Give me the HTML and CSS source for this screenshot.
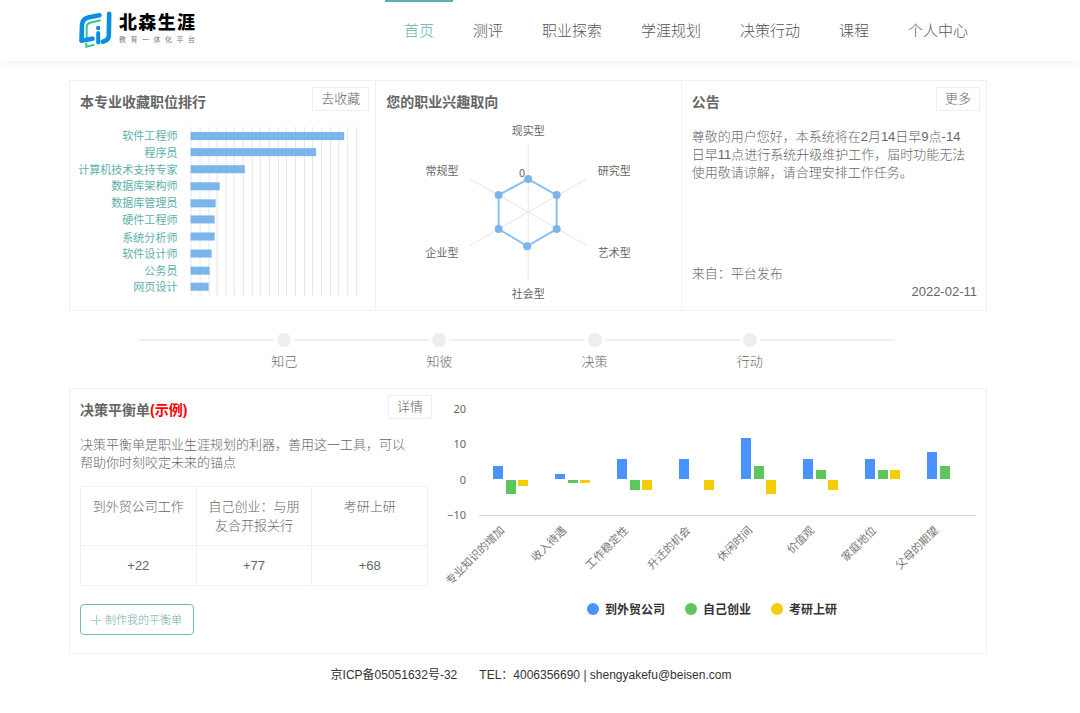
FILE: index.html
```html
<!DOCTYPE html>
<html lang="zh-CN">
<head>
<meta charset="utf-8">
<title>北森生涯</title>
<link rel="stylesheet" href="styles.css">
</head>
<body>
<header class="header">
  <a class="logo" href="#">
    <svg class="logo-mark" width="34" height="38" viewBox="0 0 34 38" fill="none" aria-hidden="true">
      <path d="M8.300 32V35.700L16.500 33.700M8.700 27V15.500Q8.900 12.500 12 11.700L22.700 9.300" stroke="#2fc7a6" stroke-width="2"/>
      <path d="M21.500 4.300L11 6.300Q4.500 7.500 4 14L3.500 29.700L14.500 27.700" stroke="#0a8ee0" stroke-width="4.600" stroke-linecap="round" stroke-linejoin="round"/>
      <path d="M31.200 2.800L30.800 25Q30.500 29.200 24.800 30.700" stroke="#0a8ee0" stroke-width="4.600" stroke-linecap="round"/>
      <path d="M20.200 22V31.500" stroke="#0a8ee0" stroke-width="4" stroke-linecap="round"/>
      <circle cx="20.200" cy="17" r="2.200" fill="#0a8ee0"/>
    </svg>
    <span class="logo-words">
      <strong class="logo-name">北森生涯</strong>
      <span class="logo-sub">教育一体化平台</span>
    </span>
  </a>
  <nav class="nav">
    <a class="nav-link active" href="#">首页</a>
    <a class="nav-link" href="#">测评</a>
    <a class="nav-link" href="#">职业探索</a>
    <a class="nav-link" href="#">学涯规划</a>
    <a class="nav-link" href="#">决策行动</a>
    <a class="nav-link" href="#">课程</a>
    <a class="nav-link" href="#">个人中心</a>
  </nav>
</header>

<main class="page">
  <div class="cards">
    <section class="card">
      <div class="card-head">
        <h2 class="title">本专业收藏职位排行</h2>
        <button class="small-button" type="button">去收藏</button>
      </div>
      <svg class="chart rank-chart" viewBox="0 0 304 184">
        <path class="grid-line" d="M120.500 8v168M129.500 8v168M138.500 8v168M146.500 8v168M155.500 8v168M163.500 8v168M172.500 8v168M181.500 8v168M189.500 8v168M198.500 8v168M207.500 8v168M215.500 8v168M224.500 8v168M233.500 8v168M241.500 8v168M250.500 8v168M259.500 8v168M267.500 8v168M276.500 8v168M285.500 8v168"/>
        <g class="rank-bars">
          <rect x="120" y="13" width="153" height="8"/>
          <rect x="120" y="29" width="125" height="8"/>
          <rect x="120" y="46" width="54" height="8"/>
          <rect x="120" y="63" width="29" height="8"/>
          <rect x="120" y="80" width="25" height="8"/>
          <rect x="120" y="96" width="24" height="8"/>
          <rect x="120" y="113" width="24" height="8"/>
          <rect x="120" y="130" width="21" height="8"/>
          <rect x="120" y="147" width="19" height="8"/>
          <rect x="120" y="163" width="18" height="8"/>
        </g>
        <g class="rank-labels">
          <a href="#"><text x="107" y="21">软件工程师</text></a>
          <a href="#"><text x="107" y="38">程序员</text></a>
          <a href="#"><text x="107" y="55">计算机技术支持专家</text></a>
          <a href="#"><text x="107" y="71">数据库架构师</text></a>
          <a href="#"><text x="107" y="88">数据库管理员</text></a>
          <a href="#"><text x="107" y="105">硬件工程师</text></a>
          <a href="#"><text x="107" y="122">系统分析师</text></a>
          <a href="#"><text x="107" y="138">软件设计师</text></a>
          <a href="#"><text x="107" y="155">公务员</text></a>
          <a href="#"><text x="107" y="171">网页设计</text></a>
        </g>
      </svg>
    </section>

    <section class="card">
      <div class="card-head">
        <h2 class="title">您的职业兴趣取向</h2>
      </div>
      <svg class="chart radar-chart" viewBox="0 0 304 184">
        <path class="axis" d="M152 25V160M93.500 59.500L210.500 126.500M93.500 126.500L210.500 59.500"/>
        <path class="radar-shape" d="M152 60L180.500 76V110L151 127L122.500 110V76Z"/>
        <g class="radar-dots">
          <circle cx="152" cy="60" r="4"/><circle cx="180.500" cy="76" r="4"/><circle cx="180.500" cy="110" r="4"/>
          <circle cx="151" cy="127" r="4"/><circle cx="122.500" cy="110" r="4"/><circle cx="122.500" cy="76" r="4"/>
        </g>
        <g class="radar-labels">
          <text x="152" y="16">现实型</text>
          <text x="238" y="56">研究型</text>
          <text x="238" y="138">艺术型</text>
          <text x="152" y="179">社会型</text>
          <text x="66" y="138">企业型</text>
          <text x="66" y="56">常规型</text>
          <text x="146" y="58">0</text>
        </g>
      </svg>
    </section>

    <section class="card notice">
      <div class="card-head">
        <h2 class="title">公告</h2>
        <button class="small-button" type="button">更多</button>
      </div>
      <p class="text notice-text">尊敬的用户您好，本系统将在2月14日早9点-14<br>日早11点进行系统升级维护工作，届时功能无法<br>使用敬请谅解，请合理安排工作任务。</p>
      <p class="text notice-from">来自：平台发布</p>
      <time class="text notice-date" datetime="2022-02-11">2022-02-11</time>
    </section>
  </div>

  <div class="steps">
    <span class="step-line"></span>
    <div class="step"><span class="step-dot"></span><span class="step-name">知己</span></div>
    <span class="step-line"></span>
    <div class="step"><span class="step-dot"></span><span class="step-name">知彼</span></div>
    <span class="step-line"></span>
    <div class="step"><span class="step-dot"></span><span class="step-name">决策</span></div>
    <span class="step-line"></span>
    <div class="step"><span class="step-dot"></span><span class="step-name">行动</span></div>
    <span class="step-line"></span>
  </div>

  <section class="balance">
    <div class="balance-info">
      <div class="card-head">
        <h2 class="title">决策平衡单<span class="example">(示例)</span></h2>
        <button class="small-button" type="button">详情</button>
      </div>
      <p class="text balance-text">决策平衡单是职业生涯规划的利器，善用这一工具，可以帮助你时刻咬定未来的锚点</p>
      <table class="scores">
        <thead>
          <tr><th>到外贸公司工作</th><th>自己创业：与朋友合开报关行</th><th>考研上研</th></tr>
        </thead>
        <tbody>
          <tr><td>+22</td><td>+77</td><td>+68</td></tr>
        </tbody>
      </table>
      <button class="make-button" type="button"><svg width="10" height="10" viewBox="0 0 10 10" aria-hidden="true"><path d="M0 5.500H10M5.500 0V10" stroke="#a5cfd0"/></svg>制作我的平衡单</button>
    </div>
    <svg class="chart balance-chart" viewBox="0 0 546 240">
      <g class="value-labels">
        <text x="26" y="24">20</text>
        <text x="26" y="59">10</text>
        <text x="26" y="95">0</text>
        <text x="26" y="130">−10</text>
      </g>
      <path class="base-line" d="M39 126.500H536"/>
      <g transform="translate(40 91)">
        <rect class="blue" x="13" y="-14" width="10" height="13"/><rect class="green" x="26" y="0" width="10" height="14"/><rect class="yellow" x="38" y="0" width="10" height="6"/>
        <text class="category" transform="translate(25 51) rotate(-45)">专业知识的增加</text>
      </g>
      <g transform="translate(102 91)">
        <rect class="blue" x="13" y="-6" width="10" height="5"/><rect class="green" x="26" y="0" width="10" height="3"/><rect class="yellow" x="38" y="0" width="10" height="3"/>
        <text class="category" transform="translate(25 51) rotate(-45)">收入待遇</text>
      </g>
      <g transform="translate(164 91)">
        <rect class="blue" x="13" y="-21" width="10" height="20"/><rect class="green" x="26" y="0" width="10" height="10"/><rect class="yellow" x="38" y="0" width="10" height="10"/>
        <text class="category" transform="translate(25 51) rotate(-45)">工作稳定性</text>
      </g>
      <g transform="translate(226 91)">
        <rect class="blue" x="13" y="-21" width="10" height="20"/><rect class="yellow" x="38" y="0" width="10" height="10"/>
        <text class="category" transform="translate(25 51) rotate(-45)">升迁的机会</text>
      </g>
      <g transform="translate(288 91)">
        <rect class="blue" x="13" y="-42" width="10" height="41"/><rect class="green" x="26" y="-14" width="10" height="13"/><rect class="yellow" x="38" y="0" width="10" height="14"/>
        <text class="category" transform="translate(25 51) rotate(-45)">休闲时间</text>
      </g>
      <g transform="translate(350 91)">
        <rect class="blue" x="13" y="-21" width="10" height="20"/><rect class="green" x="26" y="-10" width="10" height="9"/><rect class="yellow" x="38" y="0" width="10" height="10"/>
        <text class="category" transform="translate(25 51) rotate(-45)">价值观</text>
      </g>
      <g transform="translate(412 91)">
        <rect class="blue" x="13" y="-21" width="10" height="20"/><rect class="green" x="26" y="-10" width="10" height="9"/><rect class="yellow" x="38" y="-10" width="10" height="9"/>
        <text class="category" transform="translate(25 51) rotate(-45)">家庭地位</text>
      </g>
      <g transform="translate(474 91)">
        <rect class="blue" x="13" y="-28" width="10" height="27"/><rect class="green" x="26" y="-14" width="10" height="13"/>
        <text class="category" transform="translate(25 51) rotate(-45)">父母的期望</text>
      </g>
      <g class="legend">
        <circle class="blue" cx="153" cy="220" r="6"/><text x="165" y="225">到外贸公司</text>
        <circle class="green" cx="251" cy="220" r="6"/><text x="263" y="225">自己创业</text>
        <circle class="yellow" cx="337" cy="220" r="6"/><text x="349" y="225">考研上研</text>
      </g>
    </svg>
  </section>
</main>

<footer class="footer">
  <span>京ICP备05051632号-32</span>
  <span>TEL：4006356690 | shengyakefu@beisen.com</span>
</footer>
</body>
</html>
```
FILE: styles.css
```css
* {
  box-sizing: border-box;
}

body {
  margin: 0;
  background: #fff;
  color: #666;
  font: 13px/18px "Liberation Sans", "Noto Sans CJK SC", sans-serif;
}

a {
  text-decoration: none;
}

.header {
  display: flex;
  align-items: flex-start;
  justify-content: space-between;
  height: 61px;
  padding: 0 93px 0 78px;
  box-shadow: 0 2px 6px rgba(0, 0, 0, 0.05);
}

.logo {
  display: flex;
  gap: 7px;
  padding-top: 11px;
}

.logo-words {
  display: flex;
  flex-direction: column;
  width: 76px;
}

.logo-name,
.logo-sub {
  text-align: justify;
  text-align-last: justify;
}

.logo-name {
  color: #000;
  font-size: 18px;
  font-weight: 900;
  line-height: 24px;
}

.logo-sub {
  color: #777;
  font-size: 7px;
  line-height: 9px;
}

.nav {
  display: flex;
  gap: 1px;
}

.nav-link {
  padding: 0 19px;
  border-top: 2px solid transparent;
  color: #555;
  font-size: 15px;
  font-weight: 300;
  line-height: 58px;
}

.nav-link.active {
  border-color: #5fb0ae;
  color: #5fb0ae;
}

.page {
  padding: 19px 93px 0 69px;
}

.cards {
  display: grid;
  grid-template-columns: repeat(3, 1fr);
  border: 1px solid #f0f0f0;
}

.card {
  display: flex;
  flex-direction: column;
  min-height: 229px;
}

.card + .card {
  border-left: 1px solid #f0f0f0;
}

.card-head {
  display: flex;
  align-items: flex-start;
  justify-content: space-between;
  height: 38px;
  padding: 6px 6px 0 10px;
}

.title {
  margin: 5px 0 0;
  color: #666;
  font-size: 14px;
  font-weight: 700;
  line-height: 20px;
}

.example {
  color: #f00;
}

.small-button {
  height: 24px;
  padding: 0 8px;
  border: 1px solid #eee;
  background: #fff;
  color: #666;
  font: 300 13px/20px "Liberation Sans", "Noto Sans CJK SC", sans-serif;
}

.chart {
  display: block;
  width: 100%;
  height: auto;
  font-family: "Noto Sans CJK SC", sans-serif;
  font-size: 11px;
}

.grid-line,
.axis {
  fill: none;
  stroke: #e6e6e6;
}

.rank-bars {
  fill: #7cb5ec;
}

.rank-labels {
  fill: #5cafad;
  text-anchor: end;
}

.radar-shape {
  fill: none;
  stroke: #8cc0f0;
  stroke-width: 2;
}

.radar-dots {
  fill: #7cb5ec;
}

.radar-labels {
  fill: #666;
  text-anchor: middle;
}

.text {
  margin: 0;
  font-weight: 300;
}

.notice {
  padding-bottom: 9px;
}

.notice-text {
  padding: 9px 10px 0;
}

.notice-from {
  margin-top: auto;
  padding: 0 10px;
}

.notice-date {
  padding: 0 9px;
  text-align: right;
}

.steps {
  display: flex;
  height: 77px;
  padding: 22px 92px 0 70px;
}

.step-line {
  flex: 1;
  height: 2px;
  margin-top: 6px;
  background: #f0f0f0;
}

.step {
  display: flex;
  flex-direction: column;
  align-items: center;
  gap: 6px;
  width: 20px;
  font-weight: 300;
  white-space: nowrap;
}

.step-dot {
  width: 14px;
  height: 14px;
  border-radius: 50%;
  background: #eee;
}

.balance {
  display: grid;
  grid-template-columns: 370fr 546fr;
  min-height: 266px;
  border: 1px solid #f0f0f0;
}

.balance-info .card-head {
  padding-right: 8px;
}

.balance-text {
  padding: 9px 26px 0 10px;
}

.scores {
  width: calc(100% - 22px);
  margin: 14px 12px 0 10px;
  border-collapse: collapse;
  table-layout: fixed;
}

.scores th,
.scores td {
  border: 1px solid #f0f0f0;
  padding: 10px;
  font-weight: 300;
  line-height: 19px;
  text-align: center;
  vertical-align: top;
}

.make-button {
  display: inline-flex;
  align-items: center;
  gap: 4px;
  height: 31px;
  margin: 18px 0 0 10px;
  padding: 0 11px 0 10px;
  border: 1px solid #6cbcba;
  border-radius: 4px;
  background: #fff;
  color: #6fabaa;
  font: 300 11px/18px "Liberation Sans", "Noto Sans CJK SC", sans-serif;
}

.value-labels {
  fill: #666;
  font-family: "Noto Sans", sans-serif;
  text-anchor: end;
}

.base-line {
  stroke: #ccd6eb;
}

.category {
  fill: #777;
  text-anchor: end;
}

.blue {
  fill: #4992ff;
}

.green {
  fill: #5dc65d;
}

.yellow {
  fill: #f5cd07;
}

.legend text {
  fill: #333;
  font-size: 12px;
  font-weight: 700;
}

.footer {
  display: flex;
  justify-content: center;
  gap: 22px;
  padding: 12px 18px 31px 0;
  color: #333;
  font-size: 12px;
}
```
